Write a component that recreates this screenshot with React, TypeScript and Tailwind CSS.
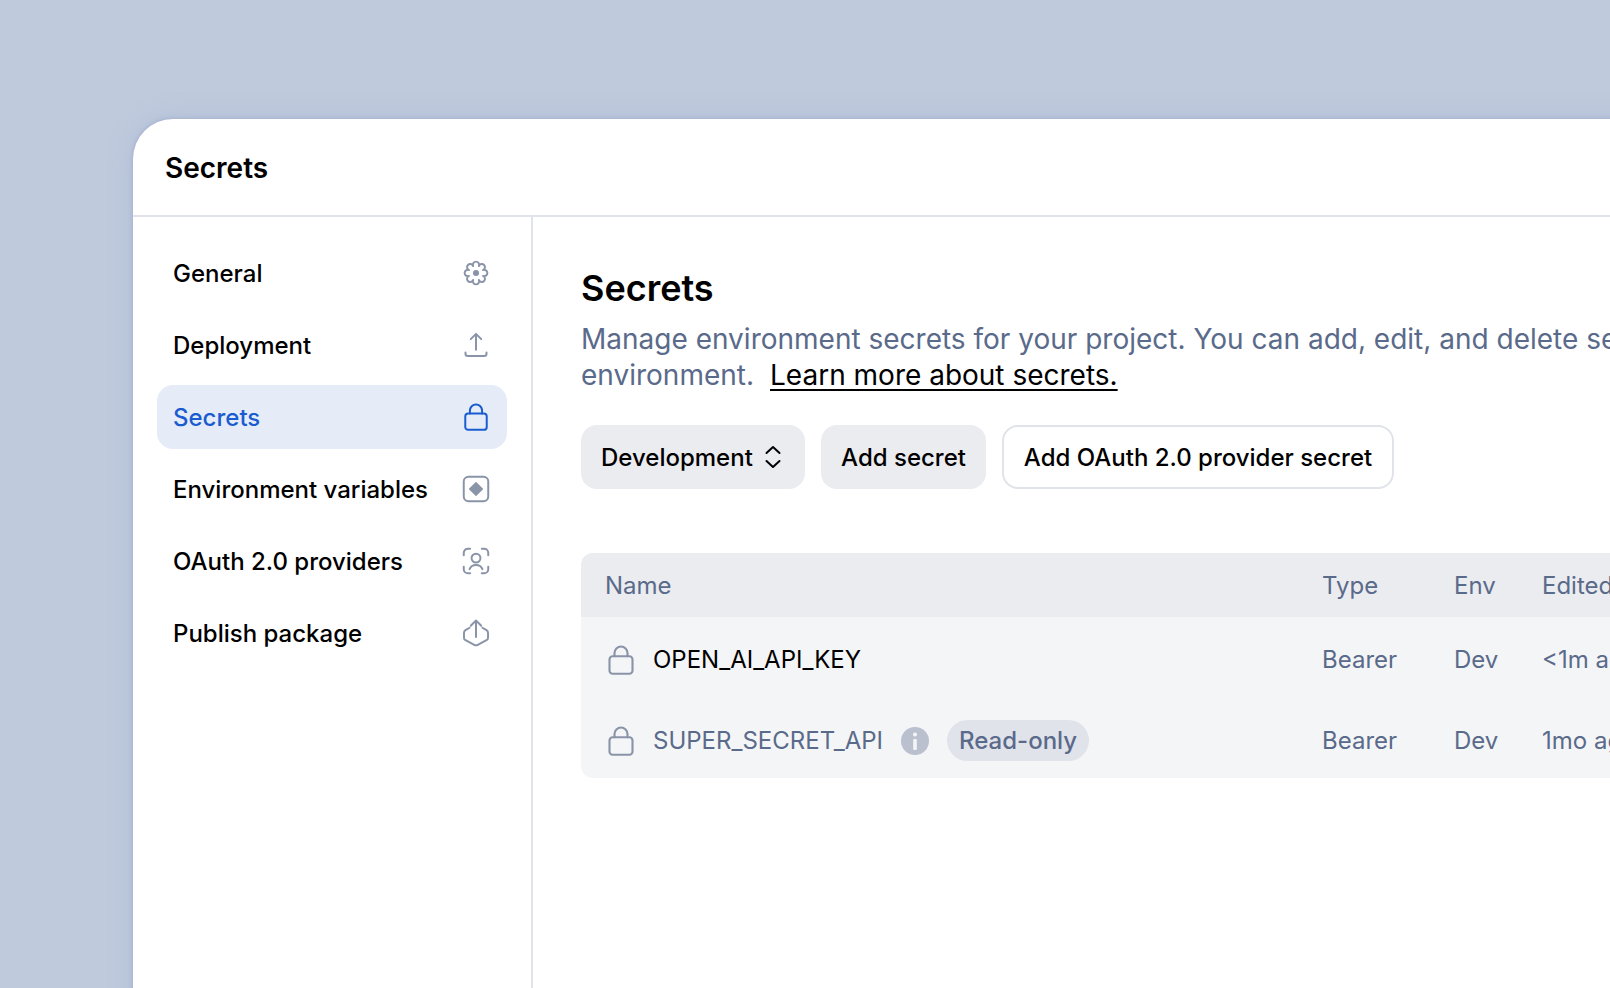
import React from "react";

const GearIcon = () => (
  <svg viewBox="0 0 24 24" className="w-[28px] h-[28px]" fill="none" stroke="currentColor" strokeWidth="1.7" strokeLinejoin="round">
    <path d="M18 14.49A2.7 2.7 0 1 1 14.49 18A2.7 2.7 0 1 1 9.51 18A2.7 2.7 0 1 1 6 14.49A2.7 2.7 0 1 1 6 9.51A2.7 2.7 0 1 1 9.51 6A2.7 2.7 0 1 1 14.49 6A2.7 2.7 0 1 1 18 9.51A2.7 2.7 0 1 1 18 14.49Z" />
    <circle cx="12" cy="12" r="2.6" fill="currentColor" stroke="none" />
  </svg>
);

const UploadIcon = () => (
  <svg viewBox="0 0 24 24" className="w-[28px] h-[28px]" fill="none" stroke="currentColor" strokeWidth="1.7" strokeLinecap="round" strokeLinejoin="round">
    <path d="M12 16V2.5M7.5 7L12 2.5L16.5 7" />
    <path d="M3 18.5V19.5a2 2 0 0 0 2 2h14a2 2 0 0 0 2-2v-1" />
  </svg>
);

const LockIcon = ({ size = "w-[28px] h-[28px]" }: { size?: string }) => (
  <svg viewBox="0 0 24 24" className={size} fill="none" stroke="currentColor" strokeWidth="1.7" strokeLinecap="round" strokeLinejoin="round">
    <rect x="2.8" y="9" width="18.4" height="14" rx="2.5" />
    <path d="M6.8 9V6.4a5.2 5.2 0 0 1 10.4 0V9" />
  </svg>
);

const EnvIcon = () => (
  <svg viewBox="0 0 24 24" className="w-[28px] h-[28px]" fill="none" stroke="currentColor" strokeWidth="1.7" strokeLinejoin="round">
    <rect x="1.5" y="1.5" width="21" height="21" rx="4" />
    <path d="M12 6.5L17.5 12L12 17.5L6.5 12Z" fill="currentColor" strokeWidth="1" />
  </svg>
);

const OAuthIcon = () => (
  <svg viewBox="0 0 24 24" className="w-[28px] h-[28px]" fill="none" stroke="currentColor" strokeWidth="1.7" strokeLinecap="round" strokeLinejoin="round">
    <path d="M7 1.5H5A3.5 3.5 0 0 0 1.5 5V7M17 1.5H19A3.5 3.5 0 0 1 22.5 5V7M7 22.5H5A3.5 3.5 0 0 1 1.5 19V17M17 22.5H19A3.5 3.5 0 0 0 22.5 19V17" />
    <circle cx="12" cy="9.5" r="3.8" />
    <path d="M6.5 19C7.5 16.5 9.5 15.5 12 15.5S16.5 16.5 17.5 19" />
  </svg>
);

const PackageIcon = () => (
  <svg viewBox="0 0 24 24" className="w-[28px] h-[28px]" fill="none" stroke="currentColor" strokeWidth="1.7" strokeLinecap="round" strokeLinejoin="round">
    <path d="M12 15.5V1.3M7.5 5.8L12 1.3L16.5 5.8" />
    <path d="M6.5 7.5L3 9.6Q1.7 10.4 1.7 11.8V16Q1.7 17.5 3 18.2L10.5 22.2Q12 23 13.5 22.2L21 18.2Q22.3 17.5 22.3 16V11.8Q22.3 10.4 21 9.6L17.5 7.5" />
  </svg>
);

const navItems = [
  { name: "General", icon: <GearIcon /> },
  { name: "Deployment", icon: <UploadIcon /> },
  { name: "Secrets", icon: <LockIcon />, active: true },
  { name: "Environment variables", icon: <EnvIcon /> },
  { name: "OAuth 2.0 providers", icon: <OAuthIcon /> },
  { name: "Publish package", icon: <PackageIcon /> },
];

export default function App() {
  return (
    <div className="w-[1610px] h-[988px] overflow-hidden bg-[#bfcadd] pl-[133px] pt-[119px] [font-family:Inter,sans-serif]">
      <div className="w-[1700px] h-[1000px] bg-white rounded-tl-[40px] shadow-[0_0_4px_#9dacca,0_0_24px_rgba(150,165,200,0.35)]">
        <div className="h-[98px] pl-[32px] pt-[32px] border-b-2 border-[#e1e3ea] text-[28px] leading-[34px] font-semibold text-black">
          Secrets
        </div>
        <div className="flex h-[900px]">
          <div className="w-[400px] shrink-0 border-r-2 border-[#e1e3ea] pl-[24px] pr-[24px] pt-[24px] flex flex-col gap-[8px]">
            {navItems.map((item) => (
              <div
                key={item.name}
                className={`h-[64px] rounded-[16px] pl-[16px] pr-[17px] flex items-center justify-between text-[24px] font-medium ${
                  item.active ? "bg-[#e5ecf8] text-[#1a5cd0]" : "text-black"
                }`}
              >
                <span className="pt-[2px]">{item.name}</span>
                <span className={item.active ? "text-[#1a5cd0]" : "text-[#8a94a8]"}>{item.icon}</span>
              </div>
            ))}
          </div>
          <div className="flex-1 pl-[48px] pt-[49px]">
            <h1 className="text-[36px] leading-[44px] font-semibold text-black">Secrets</h1>
            <p className="mt-[11px] text-[28px] leading-[36px] text-[#5a6a8a] whitespace-nowrap">
              Manage environment secrets for your project. You can add, edit, and delete secrets for each
              <br />
              environment.
              <a className="ml-[16px] text-black underline decoration-2 underline-offset-4">Learn more about secrets.</a>
            </p>
            <div className="flex gap-[16px] mt-[32px] text-[24px] font-medium text-black">
              <button className="h-[64px] w-[224px] rounded-[16px] bg-[#ebecf0] flex items-center pl-[20px] gap-[11px]">
                <span className="pt-[2px]">Development</span>
                <svg viewBox="0 0 18 24" className="w-[18px] h-[24px]" fill="none" stroke="currentColor" strokeWidth="2" strokeLinecap="round" strokeLinejoin="round">
                  <path d="M2.5 8L9 2L15.5 8M2.5 16L9 22L15.5 16" />
                </svg>
              </button>
              <button className="h-[64px] w-[165px] pt-[2px] rounded-[16px] bg-[#ebecf0]">Add secret</button>
              <button className="h-[64px] w-[392px] pt-[2px] rounded-[16px] border-2 border-[#e1e3ea] bg-white">
                Add OAuth 2.0 provider secret
              </button>
            </div>
            <div className="mt-[64px] w-[1300px] rounded-[12px] overflow-hidden bg-[#f4f5f7] text-[24px] text-[#5a6a8a]">
              <div className="h-[64px] pt-[2px] bg-[#ebecf0] flex items-center">
                <div className="w-[741px] pl-[24px]">Name</div>
                <div className="w-[132px]">Type</div>
                <div className="w-[88px]">Env</div>
                <div>Edited</div>
              </div>
              <div className="h-[86px] flex items-center">
                <div className="w-[741px] pl-[25px] flex items-center gap-[17px]">
                  <span className="text-[#8a94a8]"><LockIcon size="w-[30px] h-[30px]" /></span>
                  <span className="text-black">OPEN_AI_API_KEY</span>
                </div>
                <div className="w-[132px]">Bearer</div>
                <div className="w-[88px]">Dev</div>
                <div>&lt;1m ago</div>
              </div>
              <div className="h-[75px] flex items-center">
                <div className="w-[741px] pl-[25px] flex items-center gap-[18px]">
                  <span className="-mr-[1px] text-[#8a94a8]"><LockIcon size="w-[30px] h-[30px]" /></span>
                  <span>SUPER_SECRET_API</span>
                  <span className="w-[28px] h-[28px] rounded-full bg-[#bbc0cf] flex items-center justify-center">
                    <svg viewBox="0 0 6 18" className="w-[6px] h-[18px]" fill="#f4f5f7">
                      <circle cx="3" cy="2.5" r="2" />
                      <rect x="1.2" y="7" width="3.6" height="11" rx="1" />
                    </svg>
                  </span>
                  <span className="h-[41px] px-[12px] rounded-full bg-[#e1e3ea] flex items-center font-medium">Read-only</span>
                </div>
                <div className="w-[132px]">Bearer</div>
                <div className="w-[88px]">Dev</div>
                <div>1mo ago</div>
              </div>
            </div>
          </div>
        </div>
      </div>
    </div>
  );
}
